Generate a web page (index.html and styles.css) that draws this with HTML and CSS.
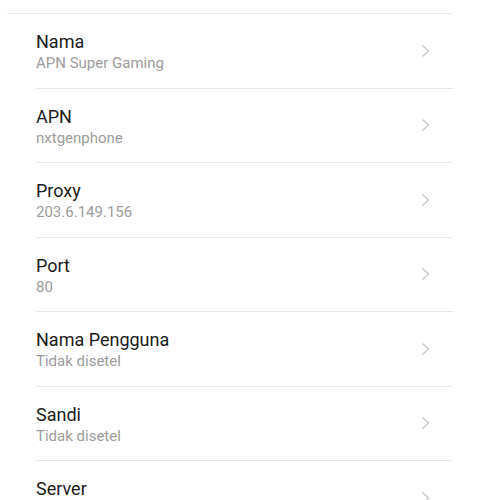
FILE: index.html
```html
<!DOCTYPE html>
<html lang="id">
<head>
  <meta charset="UTF-8" />
  <meta name="viewport" content="width=device-width, initial-scale=1.0" />
  <title>APN</title>
  <link rel="stylesheet" href="styles.css">
</head>
<body>

  <div class="apn-list">
    <div class="apn-list--top"></div>

    <div class="apn-row">
      <div class="apn-row--text">
        <p class="apn-row--title">Nama</p>
        <p class="apn-row--value">APN Super Gaming</p>
      </div>
      <svg class="apn-row--arrow" width="10" height="14" viewBox="0 0 10 14"><path d="M1.5 1.5 L7.5 7 L1.5 12.5" /></svg>
    </div>

    <div class="apn-row">
      <div class="apn-row--text">
        <p class="apn-row--title">APN</p>
        <p class="apn-row--value">nxtgenphone</p>
      </div>
      <svg class="apn-row--arrow" width="10" height="14" viewBox="0 0 10 14"><path d="M1.5 1.5 L7.5 7 L1.5 12.5" /></svg>
    </div>

    <div class="apn-row">
      <div class="apn-row--text">
        <p class="apn-row--title">Proxy</p>
        <p class="apn-row--value">203.6.149.156</p>
      </div>
      <svg class="apn-row--arrow" width="10" height="14" viewBox="0 0 10 14"><path d="M1.5 1.5 L7.5 7 L1.5 12.5" /></svg>
    </div>

    <div class="apn-row">
      <div class="apn-row--text">
        <p class="apn-row--title">Port</p>
        <p class="apn-row--value">80</p>
      </div>
      <svg class="apn-row--arrow" width="10" height="14" viewBox="0 0 10 14"><path d="M1.5 1.5 L7.5 7 L1.5 12.5" /></svg>
    </div>

    <div class="apn-row">
      <div class="apn-row--text">
        <p class="apn-row--title">Nama Pengguna</p>
        <p class="apn-row--value">Tidak disetel</p>
      </div>
      <svg class="apn-row--arrow" width="10" height="14" viewBox="0 0 10 14"><path d="M1.5 1.5 L7.5 7 L1.5 12.5" /></svg>
    </div>

    <div class="apn-row">
      <div class="apn-row--text">
        <p class="apn-row--title">Sandi</p>
        <p class="apn-row--value">Tidak disetel</p>
      </div>
      <svg class="apn-row--arrow" width="10" height="14" viewBox="0 0 10 14"><path d="M1.5 1.5 L7.5 7 L1.5 12.5" /></svg>
    </div>

    <div class="apn-row">
      <div class="apn-row--text">
        <p class="apn-row--title">Server</p>
        <p class="apn-row--value">Tidak disetel</p>
      </div>
      <svg class="apn-row--arrow" width="10" height="14" viewBox="0 0 10 14"><path d="M1.5 1.5 L7.5 7 L1.5 12.5" /></svg>
    </div>
  </div>

</body>
</html>
```

FILE: styles.css
```css
* { box-sizing: border-box; margin: 0; padding: 0; }

html, body {
  background-color: #fff;
  font-family: Roboto, 'Noto Sans', sans-serif;
}

.apn-list {
  padding-top: 13px;
}

.apn-list--top {
  margin: 0 26px 0 7px;
  border-top: 1px solid #e6e6e6;
}

.apn-row {
  display: flex;
  align-items: center;
  justify-content: space-between;
  margin: 0 26px 0 36px;
  padding: 17px 22px 14.5px 0;
  border-bottom: 1px solid #e6e6e6;
}

.apn-row--title {
  font-size: 18px;
  line-height: 22px;
  color: #1b1b1b;
}

.apn-row--value {
  font-size: 15px;
  line-height: 20px;
  color: #9c9c9c;
}

.apn-row--arrow {
  display: block;
  margin-top: -3px;
}

.apn-row--arrow path {
  fill: none;
  stroke: #c6c6c6;
  stroke-width: 1.3;
}
```
